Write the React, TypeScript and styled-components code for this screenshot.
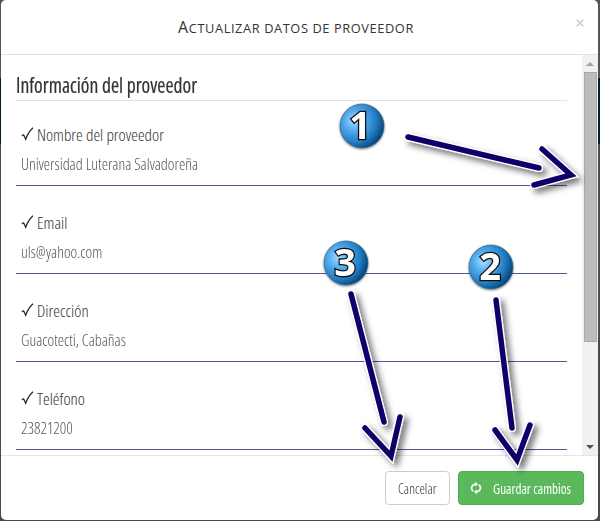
import React from "react";
import styled, { createGlobalStyle } from "styled-components";

const GlobalStyle = createGlobalStyle`
  * { box-sizing: border-box; }
  html, body { margin: 0; overflow: hidden; }
  body { background: #4a4a4a; font-family: "Open Sans", "Noto Sans", sans-serif; font-weight: 300; font-stretch: 75%; color: #333; }
`;

const Page = styled.main`
  position: relative;
  width: 600px;
  height: 521px;
  padding: 0 2px 1px 1px;
  background: linear-gradient(#555 0 78px, #051d2b 78px 144px, #4a4a4a 144px);
`;

const Modal = styled.section`
  display: flex;
  flex-direction: column;
  height: 520px;
  background: #fff;
  border-radius: 5px;
  overflow: hidden;
`;

const Header = styled.header`
  display: flex;
  justify-content: space-between;
  align-items: center;
  flex: 0 0 55px;
  padding: 0 14px 0 177px;
  border-bottom: 1px solid #e2e2e2;
`;

const Title = styled.h1`
  margin: 0;
  font: 400 12.8px/20px "Open Sans", sans-serif;
  letter-spacing: 0.6px;
  text-transform: uppercase;
  white-space: nowrap;
  &::first-letter { font-size: 16px; }
`;

const Close = styled.button`
  display: flex;
  margin-top: -9px;
  padding: 0;
  border: 0;
  background: none;
  color: #c8c8c8;
`;

const Body = styled.div`
  display: flex;
  flex: 0 0 400px;
  overflow: hidden;
`;

const Form = styled.form`
  flex: 1;
  padding: 15px 15px 0 15px;
`;

const SectionTitle = styled.h2`
  margin: 0 0 11px;
  height: 31px;
  border-bottom: 1px solid #e2e2e2;
  font-size: 21px;
  font-weight: 500;
  line-height: 31px;
  -webkit-text-stroke: 0.2px #333;
`;

const Field = styled.div`
  height: 74px;
  margin-bottom: 14px;
  padding: 8px 5px 0;
  border-bottom: 1px solid #4a5b98;
`;

const Label = styled.label`
  display: flex;
  align-items: center;
  gap: 3px;
  height: 28px;
  margin-bottom: 2px;
  font-size: 17px;
`;

const Value = styled.div`
  height: 28px;
  line-height: 28px;
  font-size: 16px;
  color: #555;
`;

const Fit = styled.span<{ $x?: number }>`
  display: inline-block;
  white-space: nowrap;
  transform: scaleX(${(p) => p.$x ?? 1});
  transform-origin: left;
`;

const Scrollbar = styled.div`
  display: flex;
  flex-direction: column;
  align-items: center;
  flex: 0 0 16px;
  padding: 7px 0 6px;
  background: #f1f1f1;
`;

const Thumb = styled.div`
  width: 13px;
  height: 270px;
  margin: 6px 0 auto 1px;
  border: 1px solid #a8a8a8;
  background: #bcbcbc;
`;

const Arrow = styled.i<{ $down?: boolean }>`
  border: solid transparent;
  border-width: ${(p) => (p.$down ? "4px 4px 0" : "0 4px 4px")};
  border-${(p) => (p.$down ? "top" : "bottom")}-color: ${(p) => (p.$down ? "#505050" : "#a3a3a3")};
`;

const Footer = styled.footer`
  display: flex;
  justify-content: flex-end;
  flex: 1;
  gap: 8px;
  padding: 15px 14px 0;
  border-top: 1px solid #e5e5e5;
`;

const Button = styled.button<{ $primary?: boolean }>`
  display: flex;
  align-items: center;
  justify-content: flex-start;
  gap: 11px;
  width: ${(p) => (p.$primary ? 126 : 65)}px;
  height: 34px;
  padding: 0 0 0 ${(p) => (p.$primary ? 11 : 12)}px;
  border: 1px solid ${(p) => (p.$primary ? "#4cae4c" : "#ccc")};
  border-radius: 4px;
  background: ${(p) => (p.$primary ? "#5cb85c" : "#fff")};
  color: ${(p) => (p.$primary ? "#fff" : "#333")};
  font: inherit;
  font-size: 14px;
  font-weight: ${(p) => (p.$primary ? 400 : 300)};
`;

const Annotations = styled.svg`
  position: absolute;
  inset: 0;
  pointer-events: none;
`;

const Numeral = styled.text`
  font-family: "Open Sans", sans-serif;
  font-weight: 700;
  font-stretch: 92%;
  font-size: 38px;
`;

const fields: [string, string][] = [
  ["Nombre del proveedor", "Universidad Luterana Salvadoreña"],
  ["Email", "uls@yahoo.com"],
  ["Dirección", "Guacotecti, Cabañas"],
  ["Teléfono", "23821200"],
];

const arrows = [
  "M408 137 L539 168 M542 149 L571 175 L534 185",
  "M496 300 L512 428 M495 430 L517 460 L530 425",
  "M351 294 L384 422 M365 428 L391 456 L400 417",
];

const badges = [
  { n: "1", x: 362, y: 126, dx: -2 },
  { n: "2", x: 491, y: 267, dx: -1 },
  { n: "3", x: 346, y: 263, dx: -1 },
];

export default function App() {
  return (
    <Page>
      <GlobalStyle />
      <Modal>
        <Header>
          <Title>Actualizar datos de proveedor</Title>
          <Close aria-label="Cerrar">
            <svg width="8" height="8" viewBox="0 0 8 8"><path d="M.7.7l6.600 6.600M7.300.7L.7 7.300" stroke="currentColor" strokeWidth="1.500" /></svg>
          </Close>
        </Header>
        <Body>
          <Form>
            <SectionTitle><Fit $x={0.935}>Información del proveedor</Fit></SectionTitle>
            {fields.map(([label, value]) => (
              <Field key={label}>
                <Label>
                  <svg width="13" height="14" viewBox="0 0 13 14"><path d="M.8 8.800L2.600 7.800L4.700 12.300C6.300 7.800 8.500 4 12 .8" fill="none" stroke="#222" strokeWidth="1.200" /></svg>
                  <Fit>{label}</Fit>
                </Label>
                <Value><Fit $x={0.993}>{value}</Fit></Value>
              </Field>
            ))}
          </Form>
          <Scrollbar><Arrow /><Thumb /><Arrow $down /></Scrollbar>
        </Body>
        <Footer>
          <Button type="button"><Fit $x={0.98}>Cancelar</Fit></Button>
          <Button type="button" $primary>
            <svg width="12" height="12" viewBox="0 0 12 12" fill="none" stroke="#fff" strokeWidth="1.500"><path d="M3.200 9.300C.4 7 1.300 2.600 5.500 2.200M8.800 2.700C11.600 5 10.700 9.400 6.500 9.800" /><path d="M5 -.2l3.200 2.400L5 4.600zM7 12.200L3.800 9.800 7 7.400z" fill="#fff" stroke="none" /></svg>
            <Fit $x={0.94}>Guardar cambios</Fit>
          </Button>
        </Footer>
      </Modal>
      <Annotations width="600" height="521" viewBox="0 0 600 521">
        <defs>
          <radialGradient id="ball" cx="33%" cy="38%" r="68%">
            <stop offset="0" stopColor="#a8dcff" /><stop offset=".35" stopColor="#4fabf0" /><stop offset=".75" stopColor="#1f78bd" /><stop offset="1" stopColor="#07477d" />
          </radialGradient>
          <filter id="shadow" x="-30%" y="-30%" width="170%" height="170%"><feDropShadow dx="4" dy="4" stdDeviation="3" floodOpacity=".55" /></filter>
          <filter id="soft" x="-20%" y="-20%" width="140%" height="150%"><feDropShadow dx="0" dy="1" stdDeviation="1" floodOpacity=".5" /></filter>
        </defs>
        {arrows.map((d) => (
          <g key={d} fill="none" strokeLinecap="round" filter="url(#shadow)">
            <path d={d} stroke="#fff" strokeWidth="8" strokeMiterlimit="6" />
            <path d={d} stroke="#0d0068" strokeWidth="5.500" strokeMiterlimit="6" />
          </g>
        ))}
        {badges.map(({ n, x, y, dx }) => (
          <g key={n} filter="url(#soft)">
            <circle cx={x} cy={y} r="22" fill="url(#ball)" stroke="#3d6078" strokeWidth=".7" />
            <Numeral x={x + dx} y={y + 12.5} textAnchor="middle" fill="#fff" stroke="#111" strokeWidth="2.600" paintOrder="stroke">{n}</Numeral>
          </g>
        ))}
      </Annotations>
    </Page>
  );
}
